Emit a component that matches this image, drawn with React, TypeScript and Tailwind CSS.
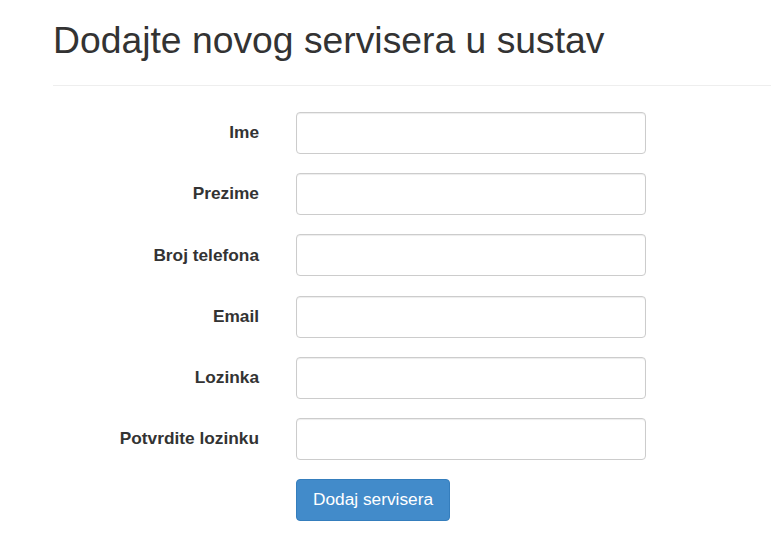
import React from 'react';

const fields = ['Ime', 'Prezime', 'Broj telefona', 'Email', 'Lozinka', 'Potvrdite lozinku'];

export default function App() {
  return (
    <div className="min-h-[543px] bg-white text-[#333] font-['Liberation_Sans',Arial,sans-serif]">
      <div className="ml-[53px] pb-[25px] border-b border-[#eee]">
        <h1 className="pt-[20px] text-[37.3px] leading-[40px] font-normal">
          Dodajte novog servisera u sustav
        </h1>
      </div>

      <form className="ml-[53px] pt-[26px]" onSubmit={(e) => e.preventDefault()}>
        {fields.map((label) => (
          <div key={label} className="flex items-center mb-[19.2px]">
            <label className="w-[206px] text-right text-[17.3px] font-bold leading-tight">
              {label}
            </label>
            <input
              type={label.startsWith('Lozinka') || label.startsWith('Potvrdite') ? 'password' : 'text'}
              className="ml-[37px] w-[350px] h-[42px] rounded-[4px] border border-[#ccc] bg-white shadow-[inset_0_1px_1px_rgba(0,0,0,0.075)] outline-none"
            />
          </div>
        ))}
        <div className="flex">
          <button
            type="submit"
            className="ml-[243px] w-[154px] h-[42px] rounded-[4px] border border-[#357ebd] bg-[#428bca] text-white text-[17.3px]"
          >
            Dodaj servisera
          </button>
        </div>
      </form>
    </div>
  );
}
